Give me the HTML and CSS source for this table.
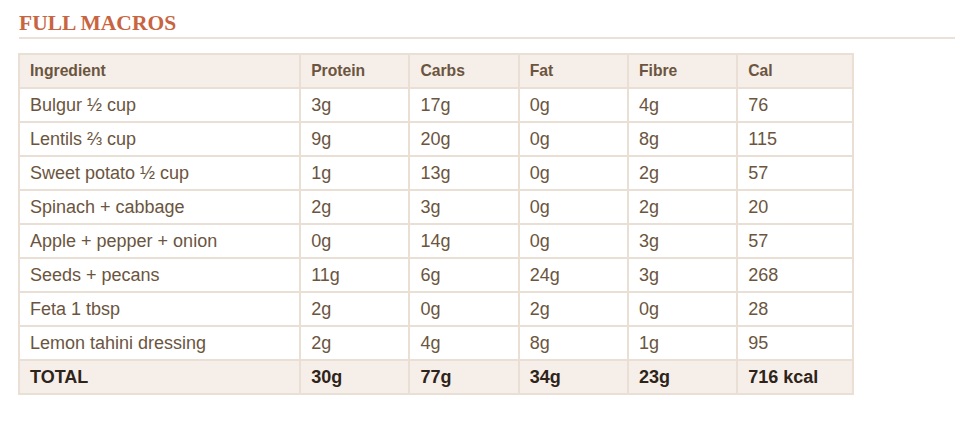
FILE: index.html
```html
<!DOCTYPE html>
<html>
<head>
<meta charset="utf-8">
<link rel="stylesheet" href="styles.css">
</head>
<body>
<section class="macros">
  <h2 class="title">FULL MACROS</h2>
  <table class="table">
    <thead>
      <tr><th class="c-ing">Ingredient</th><th>Protein</th><th>Carbs</th><th>Fat</th><th>Fibre</th><th class="c-cal">Cal</th></tr>
    </thead>
    <tbody>
      <tr><td>Bulgur ½ cup</td><td>3g</td><td>17g</td><td>0g</td><td>4g</td><td>76</td></tr>
      <tr><td>Lentils ⅔ cup</td><td>9g</td><td>20g</td><td>0g</td><td>8g</td><td>115</td></tr>
      <tr><td>Sweet potato ½ cup</td><td>1g</td><td>13g</td><td>0g</td><td>2g</td><td>57</td></tr>
      <tr><td>Spinach + cabbage</td><td>2g</td><td>3g</td><td>0g</td><td>2g</td><td>20</td></tr>
      <tr><td>Apple + pepper + onion</td><td>0g</td><td>14g</td><td>0g</td><td>3g</td><td>57</td></tr>
      <tr><td>Seeds + pecans</td><td>11g</td><td>6g</td><td>24g</td><td>3g</td><td>268</td></tr>
      <tr><td>Feta 1 tbsp</td><td>2g</td><td>0g</td><td>2g</td><td>0g</td><td>28</td></tr>
      <tr><td>Lemon tahini dressing</td><td>2g</td><td>4g</td><td>8g</td><td>1g</td><td>95</td></tr>
      <tr class="total"><td>TOTAL</td><td>30g</td><td>77g</td><td>34g</td><td>23g</td><td>716 kcal</td></tr>
    </tbody>
  </table>
</section>
</body>
</html>
```
FILE: styles.css
```css
html, body {
  margin: 0;
  padding: 0;
  background: #ffffff;
}
.macros {
  padding: 11px 13px 0 19px;
}
.title {
  margin: 0;
  font-family: "Liberation Serif", "Times New Roman", serif;
  font-weight: bold;
  font-size: 21.5px;
  line-height: 25px;
  color: #c8643f;
  padding-bottom: 1px;
  border-bottom: 2px solid #ebe1d8;
}
.table {
  margin-top: 14px;
  margin-left: -1px;
  border-collapse: collapse;
  width: 836px;
  font-family: "Liberation Sans", Arial, sans-serif;
  font-size: 18px;
  color: #6b5540;
}
.table th, .table td {
  border: 2px solid #eadfd4;
  height: 34px;
  padding: 0 10px;
  text-align: left;
  box-sizing: border-box;
}
.table th {
  background: #f6efe9;
  font-weight: bold;
  font-size: 15.7px;
  color: #6b5540;
}
.c-ing { width: 282px; }
.c-cal { width: 116px; }
.table th:not(.c-ing):not(.c-cal) { width: 109.5px; }
.total td {
  background: #f6efe9;
  font-weight: bold;
  color: #2e241a;
}
```
